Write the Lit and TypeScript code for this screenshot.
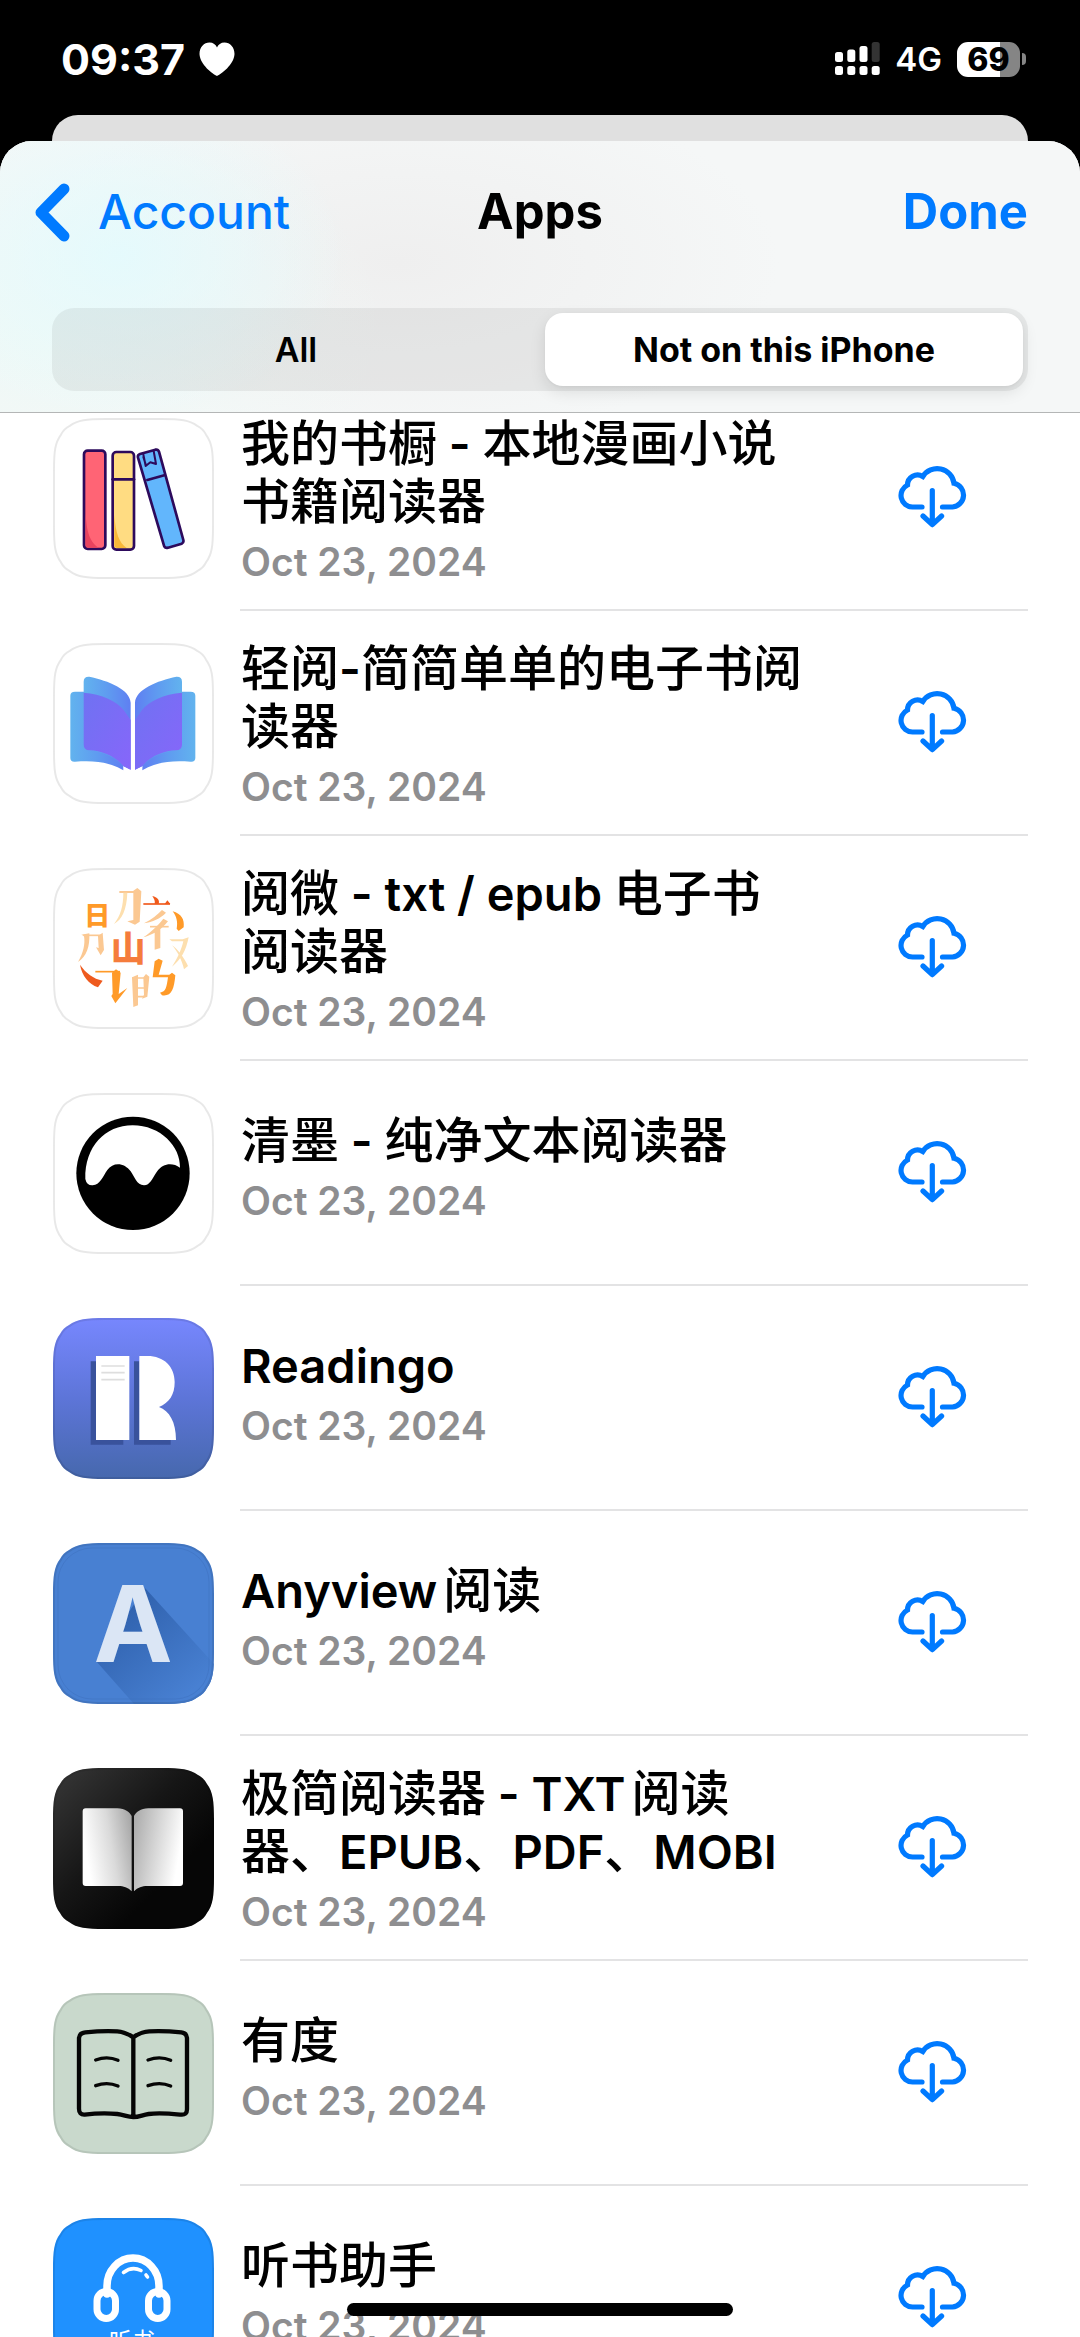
import { LitElement, html, svg, css, SVGTemplateResult } from "lit";
import { customElement, property, state } from "lit/decorators.js";
import { classMap } from "lit/directives/class-map.js";

interface AppEntry {
  name: string;
  date: string;
  icon: string;
  lines: 1 | 2;
}

const APPS: AppEntry[] = [
  { name: "我的书橱 - 本地漫画小说书籍阅读器", date: "Oct 23, 2024", icon: "shelf", lines: 2 },
  { name: "轻阅-简简单单的电子书阅读器", date: "Oct 23, 2024", icon: "pages", lines: 2 },
  { name: "阅微 - txt / epub 电子书阅读器", date: "Oct 23, 2024", icon: "strokes", lines: 2 },
  { name: "清墨 - 纯净文本阅读器", date: "Oct 23, 2024", icon: "ink", lines: 1 },
  { name: "Readingo", date: "Oct 23, 2024", icon: "readingo", lines: 1 },
  { name: "Anyview阅读", date: "Oct 23, 2024", icon: "anyview", lines: 1 },
  { name: "极简阅读器 - TXT阅读器、EPUB、PDF、MOBI", date: "Oct 23, 2024", icon: "minimal", lines: 2 },
  { name: "有度", date: "Oct 23, 2024", icon: "youdu", lines: 1 },
  { name: "听书助手", date: "Oct 23, 2024", icon: "headphones", lines: 1 },
];

// Rounded app tile outline with continuous corners, 161 x 161.
const TILE =
  "M52 0H109C128 0 137 1 145 7C149 9 152 12 154 16C160 24 161 33 161 52V109C161 128 160 137 154 145C152 149 149 152 145 154C137 160 128 161 109 161H52C33 161 24 160 16 154C12 152 9 149 7 145C1 137 0 128 0 109V52C0 33 1 24 7 16C9 12 12 9 16 7C24 1 33 0 52 0Z";

const ART: Record<string, SVGTemplateResult> = {
  shelf: svg`
    <path d=${TILE} fill="#fff" />
    <g transform="translate(-23 -18) scale(.33333)" stroke="#2d0a5c" stroke-width="8" stroke-linejoin="round" stroke-linecap="round">
      <rect x="162" y="152" width="64" height="295" rx="11" fill="#ff6475" />
      <path d="M167 340C170 400 180 425 205 443H175Q167 443 167 434Z" fill="#e8435f" stroke="none" />
      <rect x="248" y="156" width="64" height="293" rx="11" fill="#ffdc82" />
      <path d="M253 345C257 400 267 428 290 444H262Q253 444 253 436Z" fill="#f8b838" stroke="none" />
      <path d="M248 238H312" />
      <path d="M330 162L376 149Q384 147 387 155L460 420Q462 428 455 431L414 443Q405 445 402 437L324 173Q322 165 330 162Z" fill="#62b6fc" />
      <path d="M352 240L403 226" />
      <path d="M340 163L347 198L361 187L378 192L371 153M340 171L348 196" fill="none" stroke-width="6" />
    </g>`,
  pages: svg`
    <defs>
      <linearGradient id="pa" x1="0" y1="0" x2="1" y2="0">
        <stop offset="0" stop-color="#62b3ee" /><stop offset=".5" stop-color="#5f9cf0" /><stop offset="1" stop-color="#5f7ff2" />
      </linearGradient>
      <linearGradient id="pb" x1="0" y1="0" x2="1" y2="0">
        <stop offset="0" stop-color="#5f7ff2" /><stop offset=".5" stop-color="#5f9cf0" /><stop offset="1" stop-color="#62b3ee" />
      </linearGradient>
      <linearGradient id="pc" x1="0" y1="0" x2="1" y2="1">
        <stop offset="0" stop-color="#6f72f2" /><stop offset="1" stop-color="#8766fa" />
      </linearGradient>
    </defs>
    <path d=${TILE} fill="#fff" />
    <g transform="translate(-23 -243) scale(.33333)">
      <path d="M121 887Q121 875 135 875H180Q250 890 275 925L280 1111C240 1088 200 1080 135 1085Q121 1086 121 1074Z" fill="url(#pa)" />
      <path d="M496 887Q496 875 482 875H437Q367 890 342 925L337 1111C377 1088 417 1080 482 1085Q496 1086 496 1074Z" fill="url(#pb)" />
      <path d="M161 845Q161 829 178 830C235 842 300 868 302 908V1109L279 1098C255 1072 210 1052 178 1051Q161 1050 161 1034Z" fill="url(#pa)" />
      <path d="M456 845Q456 829 439 830C382 842 317 868 315 908V1109L338 1098C362 1072 407 1052 439 1051Q456 1050 456 1034Z" fill="url(#pb)" />
      <path d="M161 878C215 882 262 905 281 930L302 960V1109L280 1098C255 1068 215 1052 178 1051Q161 1050 161 1034Z" fill="url(#pc)" />
      <path d="M456 878C402 882 355 905 336 930L315 960V1109L337 1098C362 1068 402 1052 439 1051Q456 1050 456 1034Z" fill="url(#pc)" />
    </g>`,
  strokes: svg`
    <path d=${TILE} fill="#fff" />
    <g transform="translate(-13 -18) scale(.33333)" fill="none">
      <text class="glyph" x="133" y="224" font-size="78" font-weight="900" fill="#ff9a28">日</text>
      <text class="glyph" x="212" y="334" font-size="104" font-weight="900" fill="#f57c3c">山</text>
      <path d="M238 126H300" stroke="#fbc892" stroke-width="6" />
      <path d="M280 122L292 114L304 124L299 215L285 224L262 214L280 210Z" fill="#fbc892" />
      <path d="M250 128H262C260 180 246 208 222 222C242 196 250 168 250 128Z" fill="#fddfae" />
      <path d="M310 162H390" stroke="#f05a1c" stroke-width="5" />
      <path d="M337 138C352 142 360 150 356 162H344C346 152 342 146 337 138ZM374 162L382 151L391 162Z" fill="#f05a1c" />
      <path d="M378 188C360 206 338 216 312 220C336 208 352 194 366 180ZM384 214C364 240 340 254 310 262C336 244 352 228 370 206ZM344 240L361 232V294L344 299Z" fill="#fbc892" />
      <path d="M330 230H386" stroke="#fbc892" stroke-width="5" />
      <path d="M398 184C424 192 434 208 431 232L416 243L410 236C414 216 410 200 398 184Z" fill="#ff9a28" />
      <path d="M124 254L148 250C150 290 140 320 114 336C130 308 136 282 132 258ZM174 258L188 248L192 300L198 290L182 316L168 292L176 294Z" fill="#fbc892" />
      <path d="M130 256H184" stroke="#fbc892" stroke-width="5" />
      <path d="M388 268H428L446 262C438 302 424 328 396 350C414 322 424 300 430 274H396ZM396 286C412 296 434 326 444 348L432 358C426 330 412 304 396 286Z" fill="#fddfae" />
      <path d="M120 344C138 370 160 386 188 392L174 412C146 402 126 378 120 344Z" fill="#ee5a1e" />
      <path d="M166 365H240" stroke="#ff9a28" stroke-width="5" />
      <path d="M216 368L228 358L242 368L236 432L262 414L226 460L214 438L218 432Z" fill="#ff9a28" />
      <path d="M276 382L294 374V466L280 471ZM310 382L318 372L328 380L322 440L306 446L312 434Z" fill="#fbc892" />
      <path d="M276 384H320M286 414H318M286 440H312" stroke="#fbc892" stroke-width="5" />
      <path d="M344 334L356 326L368 332L356 374H388L396 368L406 376C402 420 394 440 366 436L360 428C378 426 380 410 384 382H338Z" fill="#ff9a28" />
    </g>`,
  ink: svg`
    <path d=${TILE} fill="#fff" />
    <g transform="translate(-13 -13) scale(.33333)">
      <circle cx="279" cy="280" r="170" fill="#000" />
      <path d="M136 297C134 200 195 136 278 136C362 136 422 200 420 263C398 248 370 248 350 276C336 296 330 316 312 316C290 316 284 290 272 274C254 248 220 244 202 270C188 290 180 315 158 316Q140 317 136 297Z" fill="#fff" />
    </g>`,
  readingo: svg`
    <defs>
      <linearGradient id="ra" x1="0" y1="0" x2="0" y2="1">
        <stop offset="0" stop-color="#7787fe" /><stop offset=".5" stop-color="#5d75d8" /><stop offset="1" stop-color="#4668ad" />
      </linearGradient>
    </defs>
    <path d=${TILE} fill="url(#ra)" />
    <g transform="translate(-13 -18) scale(.33333)">
      <path d="M152 184H168V420H250V434H152ZM282 184H298V420H392V434H282Z" fill="#39529c" />
      <path d="M168 168H268V420H168Z" fill="#fff" />
      <path d="M184 198H254M184 218H254M184 239H254" stroke="#dedede" stroke-width="5" />
      <path d="M298 168H322C372 168 404 200 404 246C404 284 388 308 357 321C388 332 408 366 408 420H298Z" fill="#fff" />
    </g>`,
  anyview: svg`
    <defs>
      <linearGradient id="aa" x1=".2" y1=".2" x2=".8" y2=".9">
        <stop offset="0" stop-color="#3062ae" /><stop offset="1" stop-color="#4880d2" />
      </linearGradient>
      <clipPath id="ac"><path d=${TILE} /></clipPath>
    </defs>
    <path d=${TILE} fill="#4880d2" />
    <g clip-path="url(#ac)">
      <path d="M92 45L161 121V161H81L43 118Z" fill="url(#aa)" />
    </g>
    <rect x="5" y="5" width="151" height="151" rx="34" fill="none" stroke="#3d70bd" stroke-opacity=".5" />
    <text class="latin" x="80" y="119" font-size="106" font-weight="700" text-anchor="middle" fill="#dbe6f5">A</text>`,
  minimal: svg`
    <defs>
      <linearGradient id="ma" x1="0" y1="0" x2=".7" y2=".7">
        <stop offset="0" stop-color="#383838" /><stop offset=".6" stop-color="#161616" /><stop offset="1" stop-color="#060606" />
      </linearGradient>
      <linearGradient id="mb" x1="0" y1=".3" x2="1" y2="0">
        <stop offset="0" stop-color="#fff" /><stop offset=".5" stop-color="#dadada" /><stop offset="1" stop-color="#a2a2a2" />
      </linearGradient>
      <linearGradient id="mc" x1="0" y1="0" x2="1" y2=".3">
        <stop offset="0" stop-color="#a8a8a8" /><stop offset=".5" stop-color="#d4d4d4" /><stop offset="1" stop-color="#fff" />
      </linearGradient>
    </defs>
    <path d=${TILE} fill="url(#ma)" />
    <g transform="translate(-13 -18) scale(.33333)">
      <path d="M128 184Q128 175 137 175H232C256 176 268 186 275 198V424C264 412 250 408 236 408H137Q128 408 128 399Z" fill="url(#mb)" />
      <path d="M429 184Q429 175 420 175H325C301 176 289 186 282 198V424C293 412 307 408 321 408H420Q429 408 429 399Z" fill="url(#mc)" />
    </g>`,
  youdu: svg`
    <path d=${TILE} fill="#c9d9cc" />
    <g transform="translate(-13 -13) scale(.33333)" fill="none" stroke="#050505" stroke-linecap="round" stroke-linejoin="round">
      <path d="M280 172C262 160 248 155 232 154C200 152 165 154 136 157Q118 159 117 174V386Q117 405 134 404C166 400 200 399 232 402C254 405 262 411 280 411C298 411 306 405 326 402C358 397 394 401 424 404Q441 405 441 388V174Q440 159 424 157C394 154 362 152 328 154C310 155 296 160 280 172ZM280 172V409" stroke-width="13" />
      <path d="M167 240Q202 227 234 241M324 240Q360 227 392 241M167 317Q202 304 234 318M324 317Q360 304 392 318" stroke-width="10" />
    </g>`,
  headphones: svg`
    <path d=${TILE} fill="#1f91ff" />
    <g fill="none" stroke="#fff" stroke-linecap="round">
      <path d="M54 76V68A26 28 0 0 1 106 68V76" stroke-width="7.5" />
      <rect x="44" y="73.500" width="18.500" height="27" rx="9.250" stroke-width="7" />
      <rect x="95.500" y="73.500" width="18.500" height="27" rx="9.250" stroke-width="7" />
      <path d="M70.500 54.500Q79 48 88 52.500M93 57L94.500 59" stroke-width="3.600" />
    </g>
    <text class="glyph" x="79" y="131" font-size="23" text-anchor="middle" fill="#fff">听书</text>`,
};

@customElement("app-icon")
class AppIcon extends LitElement {
  @property() name = "";

  static styles = css`
    :host { display: block; width: 161px; height: 161px; }
    .art { display: block; width: 100%; height: 100%; }
    .glyph { font-family: "Noto Sans CJK SC", sans-serif; }
    .latin { font-family: Inter, sans-serif; }
  `;

  render() {
    return html`<svg class="art" viewBox="0 0 161 161" aria-hidden="true">
      ${ART[this.name]}
      <path d=${TILE} transform="translate(1 1) scale(.98758)" fill="none" stroke="#000" stroke-opacity=".09" stroke-width="2" />
    </svg>`;
  }
}

@customElement("status-bar")
class StatusBar extends LitElement {
  static styles = css`
    :host {
      display: flex;
      align-items: center;
      height: 115px;
      padding: 3px 54px 0 61px;
      box-sizing: border-box;
      color: #fff;
      font-family: Inter, sans-serif;
    }
    .time { font-size: 43px; font-weight: 700; line-height: 52px; }
    .heart { width: 36px; height: 34px; margin-left: 14px; }
    .signal { width: 45px; height: 34px; margin-left: auto; }
    .network { font-size: 33px; font-weight: 600; line-height: 40px; margin-left: 15px; }
    .battery { display: flex; align-items: center; gap: 2px; margin-left: 15px; }
    .cell {
      width: 63px;
      height: 35px;
      border-radius: 11px;
      background: linear-gradient(90deg, #fff 69%, #858585 69%);
      color: #000;
      font-size: 32px;
      font-weight: 800;
      line-height: 35px;
      text-align: center;
    }
    .tip { width: 4px; height: 12px; border-radius: 0 4px 4px 0; background: #858585; }
  `;

  render() {
    return html`
      <span class="time">09:37</span>
      <svg class="heart" viewBox="0 0 36 34" aria-hidden="true">
        <path d="M18 34C14 32 1 23 .5 12C.5 5 5 .5 10.500 .5C14 .5 17 2.500 18 5.500C19 2.500 22 .5 25.500 .5C31 .5 35.500 5 35.500 12C35 23 22 32 18 34Z" fill="#fff" />
      </svg>
      <svg class="signal" viewBox="0 0 45 34" aria-hidden="true">
        <g fill="#fff">
          <rect x="0" y="10" width="8" height="10" rx="2.500" />
          <rect x="12.300" y="7.500" width="8" height="12.500" rx="2.500" />
          <rect x="24.500" y="4" width="8" height="16" rx="2.500" />
          <rect x="36.700" y="0" width="8" height="20" rx="2.500" fill="#333" />
          <rect x="0" y="24" width="8" height="9" rx="2.500" />
          <rect x="12.300" y="24" width="8" height="9" rx="2.500" />
          <rect x="24.500" y="24" width="8" height="9" rx="2.500" />
          <rect x="36.700" y="24" width="8" height="9" rx="2.500" />
        </g>
      </svg>
      <span class="network">4G</span>
      <span class="battery"><span class="cell">69</span><span class="tip"></span></span>
    `;
  }
}

@customElement("app-row")
class AppRow extends LitElement {
  @property({ attribute: false }) app!: AppEntry;

  static styles = css`
    :host { display: block; padding: 0 52px 0 53px; font-family: Inter, "Noto Sans CJK SC", sans-serif; }
    .row { display: flex; align-items: center; }
    .body {
      flex: 1;
      display: flex;
      align-items: center;
      min-width: 0;
      height: 161px;
      margin-left: 27px;
    }
    .text { flex: 1; min-width: 0; padding-top: 4px; }
    .text.single { padding: 0 0 10px; }
    .name {
      margin: 0;
      font-size: 49px;
      font-weight: 500;
      line-height: 58px;
      color: #000;
      text-autospace: normal;
    }
    .latin { font-size: 47px; font-weight: 600; line-height: 1; }
    .date { margin: 8px 0 0; font-size: 39px; font-weight: 600; line-height: 46px; padding-bottom: 2px; color: #8e8e90; }
    .get {
      display: block;
      flex: none;
      width: 80px;
      height: 80px;
      margin: 0 56px 0 87px;
      padding: 0 0 4px;
      border: 0;
      background: none;
      color: #007aff;
    }
    .cloud { display: block; width: 69px; height: 63px; margin: 0 auto; }
    .rule { height: 2px; margin: 30px 0 0 187px; background: #e3e3e4; }
  `;

  // Latin runs are set semibold beside the medium Chinese face.
  private runs(name: string) {
    return name
      .split(/([\x20-\x7e]+)/)
      .filter((run) => run !== "")
      .map((run) => (/^[\x20-\x7e]/.test(run) ? html`<span class="latin">${run}</span>` : run));
  }

  render() {
    const { name, date, icon, lines } = this.app;
    return html`
      <div class="row">
        <app-icon name=${icon}></app-icon>
        <div class="body">
          <div class=${classMap({ text: true, single: lines === 1 })}>
            <h2 class="name" lang="zh-CN">${this.runs(name)}</h2>
            <p class="date">${date}</p>
          </div>
          <button class="get" type="button" aria-label="Download ${name}">
            <svg class="cloud" viewBox="0 0 69 63" fill="none" stroke="currentColor" stroke-width="5.200" stroke-linecap="round" aria-hidden="true">
              <path d="M24 42H14.500A11.600 11.600 0 0 1 9.500 20A10 10 0 0 1 24.800 11.500A17 17 0 0 1 56 18.300A12 12 0 0 1 54.500 42H44.500" />
              <path d="M34.300 25.500V59M25 51L34.300 59.700L43.600 51" stroke-linejoin="round" />
            </svg>
          </button>
        </div>
      </div>
      <div class="rule"></div>
    `;
  }
}

@customElement("app-root")
class AppRoot extends LitElement {
  @state() private filter = "missing";

  static styles = css`
    :host {
      display: flex;
      flex-direction: column;
      position: relative;
      height: 100vh;
      overflow: hidden;
      background: #000;
      font-family: Inter, "Noto Sans CJK SC", sans-serif;
    }
    .behind {
      flex: none;
      height: 26px;
      margin: 0 52px;
      border-radius: 26px 26px 0 0;
      background: #e0e0e0;
    }
    .sheet {
      flex: 1;
      display: flex;
      flex-direction: column;
      min-height: 0;
      border-radius: 32px 32px 0 0;
      background: #fff;
      overflow: hidden;
    }
    .header {
      flex: none;
      padding: 0 52px 21px;
      border-bottom: 1px solid #b4b6b6;
      background:
        radial-gradient(ellipse 230px 170px at 11% 42%, rgba(226, 251, 254, 0.8), rgba(226, 251, 254, 0)),
        radial-gradient(ellipse 360px 240px at 3% 70%, rgba(238, 249, 246, 0.8), rgba(238, 249, 246, 0)),
        radial-gradient(ellipse 380px 180px at 37% 45%, #efefef, rgba(239, 239, 239, 0)),
        #f5f7f7;
    }
    .nav {
      display: grid;
      grid-template-columns: 1fr auto 1fr;
      align-items: center;
      height: 142px;
    }
    .title { margin: 0; font-size: 49px; font-weight: 700; line-height: 58px; }
    .back, .done {
      border: 0;
      padding: 0;
      background: none;
      color: #007aff;
      font: 500 48px/58px Inter, sans-serif;
    }
    .back { display: flex; align-items: center; gap: 28px; justify-self: start; margin-left: -17px; }
    .chevron { width: 35px; height: 59px; }
    .done { justify-self: end; font-size: 49px; font-weight: 700; }
    .segments {
      display: grid;
      grid-template-columns: 1fr 1fr;
      gap: 10px;
      height: 83px;
      box-sizing: border-box;
      margin-top: 25px;
      padding: 5px;
      border-radius: 22px;
      background: rgba(60, 60, 60, 0.08);
    }
    .segment {
      border: 0;
      padding: 0;
      border-radius: 18px;
      background: none;
      color: #000;
      font: 600 34px/40px Inter, sans-serif;
    }
    .segment.on {
      background: #fff;
      font-weight: 700;
      box-shadow: 0 6px 16px rgba(0, 0, 0, 0.1), 0 1px 3px rgba(0, 0, 0, 0.04);
    }
    .list { flex: 1; min-height: 0; margin: 0; padding: 5px 0 0; list-style: none; overflow: hidden; }
    .item + .item { padding-top: 32px; }
    .home {
      position: absolute;
      left: 50%;
      bottom: 21px;
      width: 386px;
      height: 13px;
      margin-left: -193px;
      border-radius: 7px;
      background: #000;
    }
  `;

  private segment(id: string, label: string) {
    const on = this.filter === id;
    return html`<button
      type="button"
      class=${classMap({ segment: true, on })}
      aria-pressed=${on ? "true" : "false"}
      @click=${() => (this.filter = id)}
    >${label}</button>`;
  }

  render() {
    return html`
      <status-bar></status-bar>
      <div class="behind"></div>
      <main class="sheet">
        <header class="header">
          <nav class="nav">
            <button class="back" type="button">
              <svg class="chevron" viewBox="0 0 35 59" fill="none" stroke="currentColor" stroke-width="11" stroke-linecap="round" stroke-linejoin="round" aria-hidden="true">
                <path d="M29 6L6 29.500L29 53" />
              </svg>
              Account
            </button>
            <h1 class="title">Apps</h1>
            <button class="done" type="button">Done</button>
          </nav>
          <div class="segments" role="group" aria-label="Filter">
            ${this.segment("all", "All")} ${this.segment("missing", "Not on this iPhone")}
          </div>
        </header>
        <ul class="list">
          ${APPS.map((app) => html`<li class="item"><app-row .app=${app}></app-row></li>`)}
        </ul>
      </main>
      <div class="home"></div>
    `;
  }
}
